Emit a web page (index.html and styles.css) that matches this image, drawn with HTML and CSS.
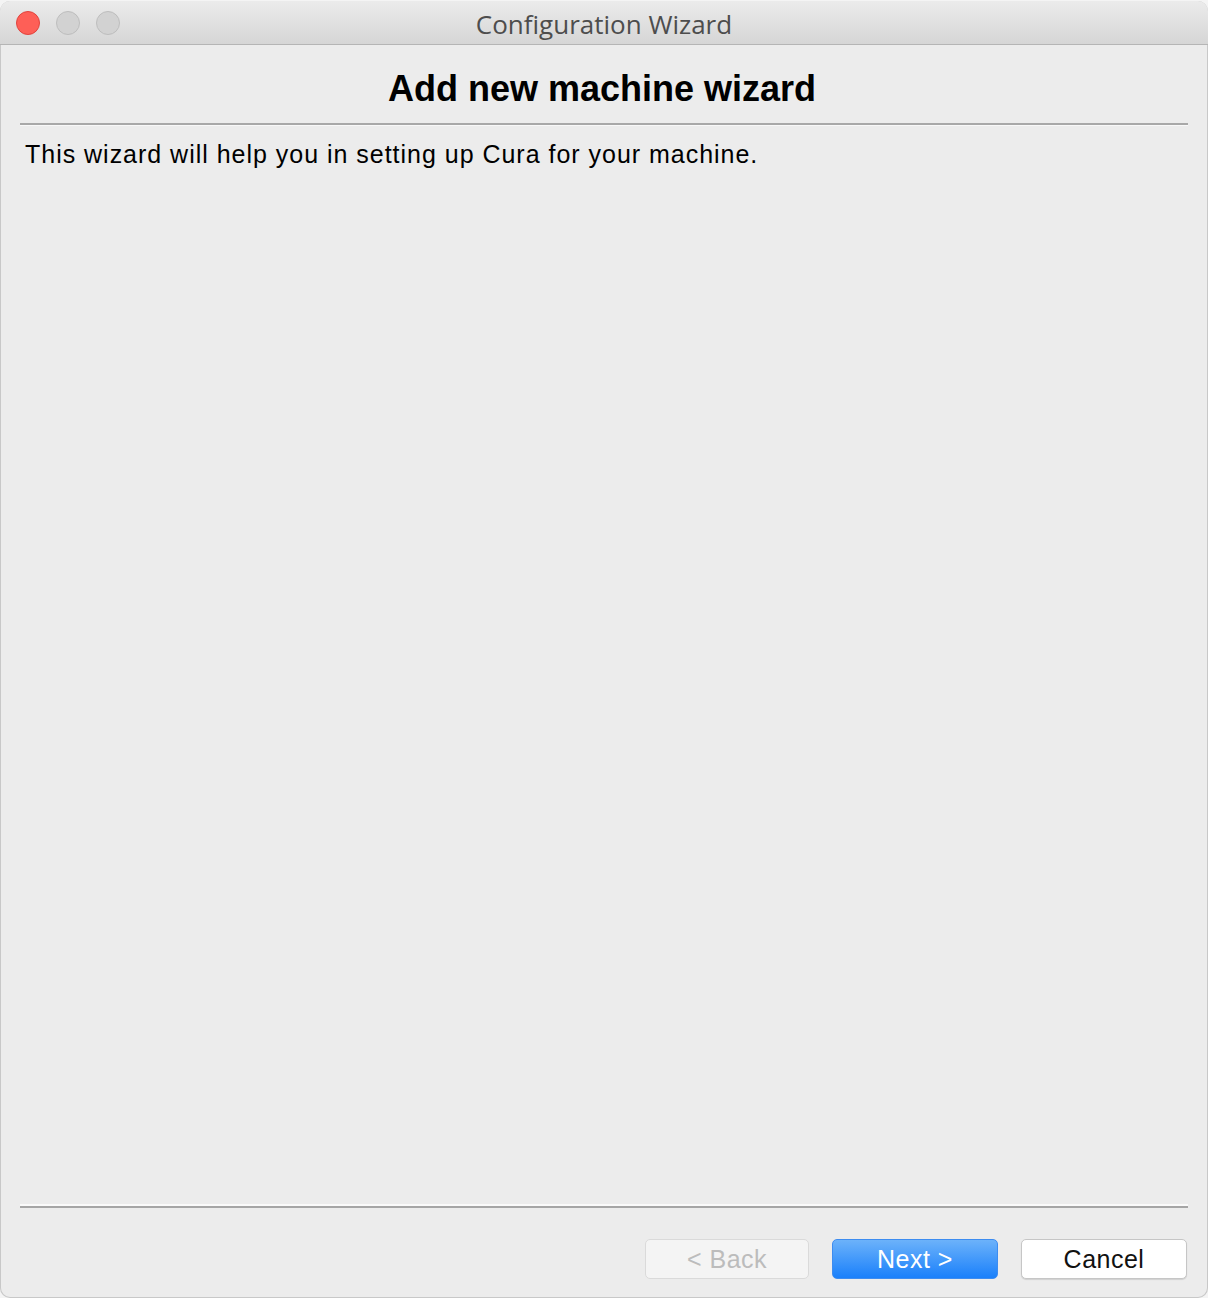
FILE: index.html
```html
<!DOCTYPE html>
<html>
<head>
<meta charset="utf-8">
<title>Configuration Wizard</title>
<link rel="stylesheet" href="styles.css">
</head>
<body>
<div class="window">
  <div class="titlebar">
    <div class="lights">
      <span class="light close"></span>
      <span class="light"></span>
      <span class="light"></span>
    </div>
    <div class="title">Configuration Wizard</div>
  </div>
  <div class="content">
    <h1 class="heading">Add new machine wizard</h1>
    <div class="divider top"></div>
    <p class="intro">This wizard will help you in setting up Cura for your machine.</p>
    <div class="spacer"></div>
    <div class="divider bottom"></div>
    <div class="buttons">
      <button class="btn back" disabled>&lt; Back</button>
      <button class="btn next">Next &gt;</button>
      <button class="btn cancel">Cancel</button>
    </div>
  </div>
</div>
</body>
</html>
```

FILE: styles.css
```css
* { box-sizing: border-box; }
html, body {
  margin: 0;
  padding: 0;
  height: 100%;
}
body {
  background: #f4f4f4;
  font-family: "Liberation Sans", Arial, sans-serif;
  overflow: hidden;
}
.window {
  margin-top: 1px;
  height: 1297px;
  width: 1208px;
  background: #ececec;
  border-radius: 10px;
  overflow: hidden;
  display: flex;
  flex-direction: column;
  box-shadow: inset 0 0 0 1px #c8c8c8;
}
.titlebar {
  height: 44px;
  flex: 0 0 44px;
  background: linear-gradient(#ebebeb, #d6d6d6);
  border-bottom: 1px solid #b5b5b5;
  display: flex;
  align-items: center;
  position: relative;
}
.lights {
  display: flex;
  gap: 16px;
  padding-left: 16px;
}
.light {
  width: 24px;
  height: 24px;
  border-radius: 50%;
  background: #d2d2d2;
  border: 1px solid #bdbdbd;
}
.light.close {
  background: #fe5f57;
  border-color: #e0443e;
}
.title {
  position: absolute;
  left: 0;
  right: 0;
  text-align: center;
  font-family: "Open Sans", "Liberation Sans", sans-serif;
  font-size: 26px;
  color: #4d4d4d;
  top: 5px;
}
.content {
  flex: 1;
  display: flex;
  flex-direction: column;
  padding: 0 20px 19px 20px;
}
.heading {
  margin: 0;
  padding-top: 22px;
  height: 78px;
  text-align: center;
  font-size: 36px;
  font-weight: bold;
  color: #000;
  line-height: 44px;
  padding-right: 4px;
}
.divider {
  height: 3px;
  border-top: 2px solid #a8a8a8;
  border-bottom: 1px solid #f8f8f8;
}
.divider.bottom {
  border-top: 2px solid #fafafa;
  border-bottom: 2px solid #a5a5a5;
  height: 4px;
}
.intro {
  margin: 12px 0 0 5px;
  font-size: 25px;
  letter-spacing: 0.98px;
  line-height: 32px;
  color: #000;
}
.spacer { flex: 1; }
.buttons {
  display: flex;
  justify-content: flex-end;
  gap: 23px;
  margin-top: 31px;
  padding-right: 1px;
}
.btn {
  width: 166px;
  height: 40px;
  border-radius: 5px;
  font-family: "Liberation Sans", Arial, sans-serif;
  font-size: 25px;
  letter-spacing: 0.5px;
  padding: 0;
  border: 1px solid #c8c8c8;
}
.btn.back {
  width: 164px;
  background: #f4f4f4;
  border-color: #dadada;
  color: #bcbcbc;
}
.btn.next {
  background: linear-gradient(#6cb2fa, #1a80fb);
  border-color: #3d8cf0;
  color: #fff;
}
.btn.cancel {
  background: #fff;
  border-color: #c6c6c6;
  box-shadow: 0 1px 1px rgba(0,0,0,0.12);
  color: #111;
}
```
